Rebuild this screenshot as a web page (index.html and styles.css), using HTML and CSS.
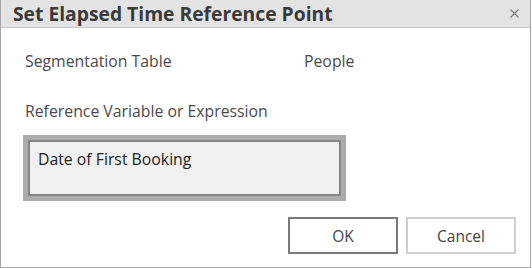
FILE: index.html
```html
<!DOCTYPE html>
<html lang="en">
<head>
  <meta charset="UTF-8" />
  <title>Set Elapsed Time Reference Point</title>
  <link rel="stylesheet" href="styles.css">
</head>
<body>

  <div class="dialog">
    <div class="titlebar">
      <span class="title">Set Elapsed Time Reference Point</span>
      <button class="close" aria-label="Close">
        <svg width="9" height="9" viewBox="0 0 9 9">
          <path d="M0.5 0.5 L8.5 8.5 M8.5 0.5 L0.5 8.5" stroke="#7a7a7a" stroke-width="1.2" fill="none"/>
        </svg>
      </button>
    </div>

    <div class="content">
      <div class="row">
        <span class="label">Segmentation Table</span>
        <span class="value">People</span>
      </div>

      <div class="row second">
        <span class="label">Reference Variable or Expression</span>
      </div>

      <div class="field-ring">
        <div class="field">Date of First Booking</div>
      </div>
    </div>

    <div class="actions">
      <button class="btn default">OK</button>
      <button class="btn">Cancel</button>
    </div>
  </div>

</body>
</html>
```

FILE: styles.css
```css
* {
  box-sizing: border-box;
}

body {
  margin: 0;
  background: #fff;
  font-family: "Open Sans", "Noto Sans", sans-serif;
  color: #4a4a4a;
}

.dialog {
  width: 531px;
  height: 268px;
  border: 1px solid #a6a6a6;
  border-top: none;
  display: flex;
  flex-direction: column;
}

.titlebar {
  height: 28px;
  background: #e3e3e3;
  border-bottom: 1px solid #c4c4c4;
  display: flex;
  align-items: center;
  justify-content: space-between;
  padding: 0 10px 0 12px;
}

.title {
  font-weight: bold;
  font-size: 19.3px;
  color: #3a3a3a;
}

.close {
  border: none;
  background: none;
  padding: 0;
  width: 12px;
  height: 12px;
  display: flex;
  align-items: center;
  justify-content: center;
}

.content {
  padding: 23px 0 0 22px;
}

.row {
  display: flex;
  font-size: 15.8px;
  height: 20px;
  align-items: center;
  padding-left: 2px;
}

.row.second {
  margin-top: 30px;
}

.label {
  width: 279px;
}

.field-ring {
  margin-top: 14px;
  width: 323px;
  height: 66px;
  background: #ababab;
  padding: 5px;
}

.field {
  width: 100%;
  height: 100%;
  border: 2px solid #858585;
  background: #f0f0f0;
  color: #222;
  font-size: 15.8px;
  padding: 6px 0 0 8px;
}

.actions {
  display: flex;
  justify-content: flex-end;
  gap: 8px;
  margin-top: 16px;
  padding-right: 14px;
}

.btn {
  width: 110px;
  height: 37px;
  background: #fff;
  border: 2px solid #cfcfcf;
  font-family: inherit;
  font-size: 15.5px;
  color: #444;
}

.btn.default {
  border-color: #7a7a7a;
}
```
